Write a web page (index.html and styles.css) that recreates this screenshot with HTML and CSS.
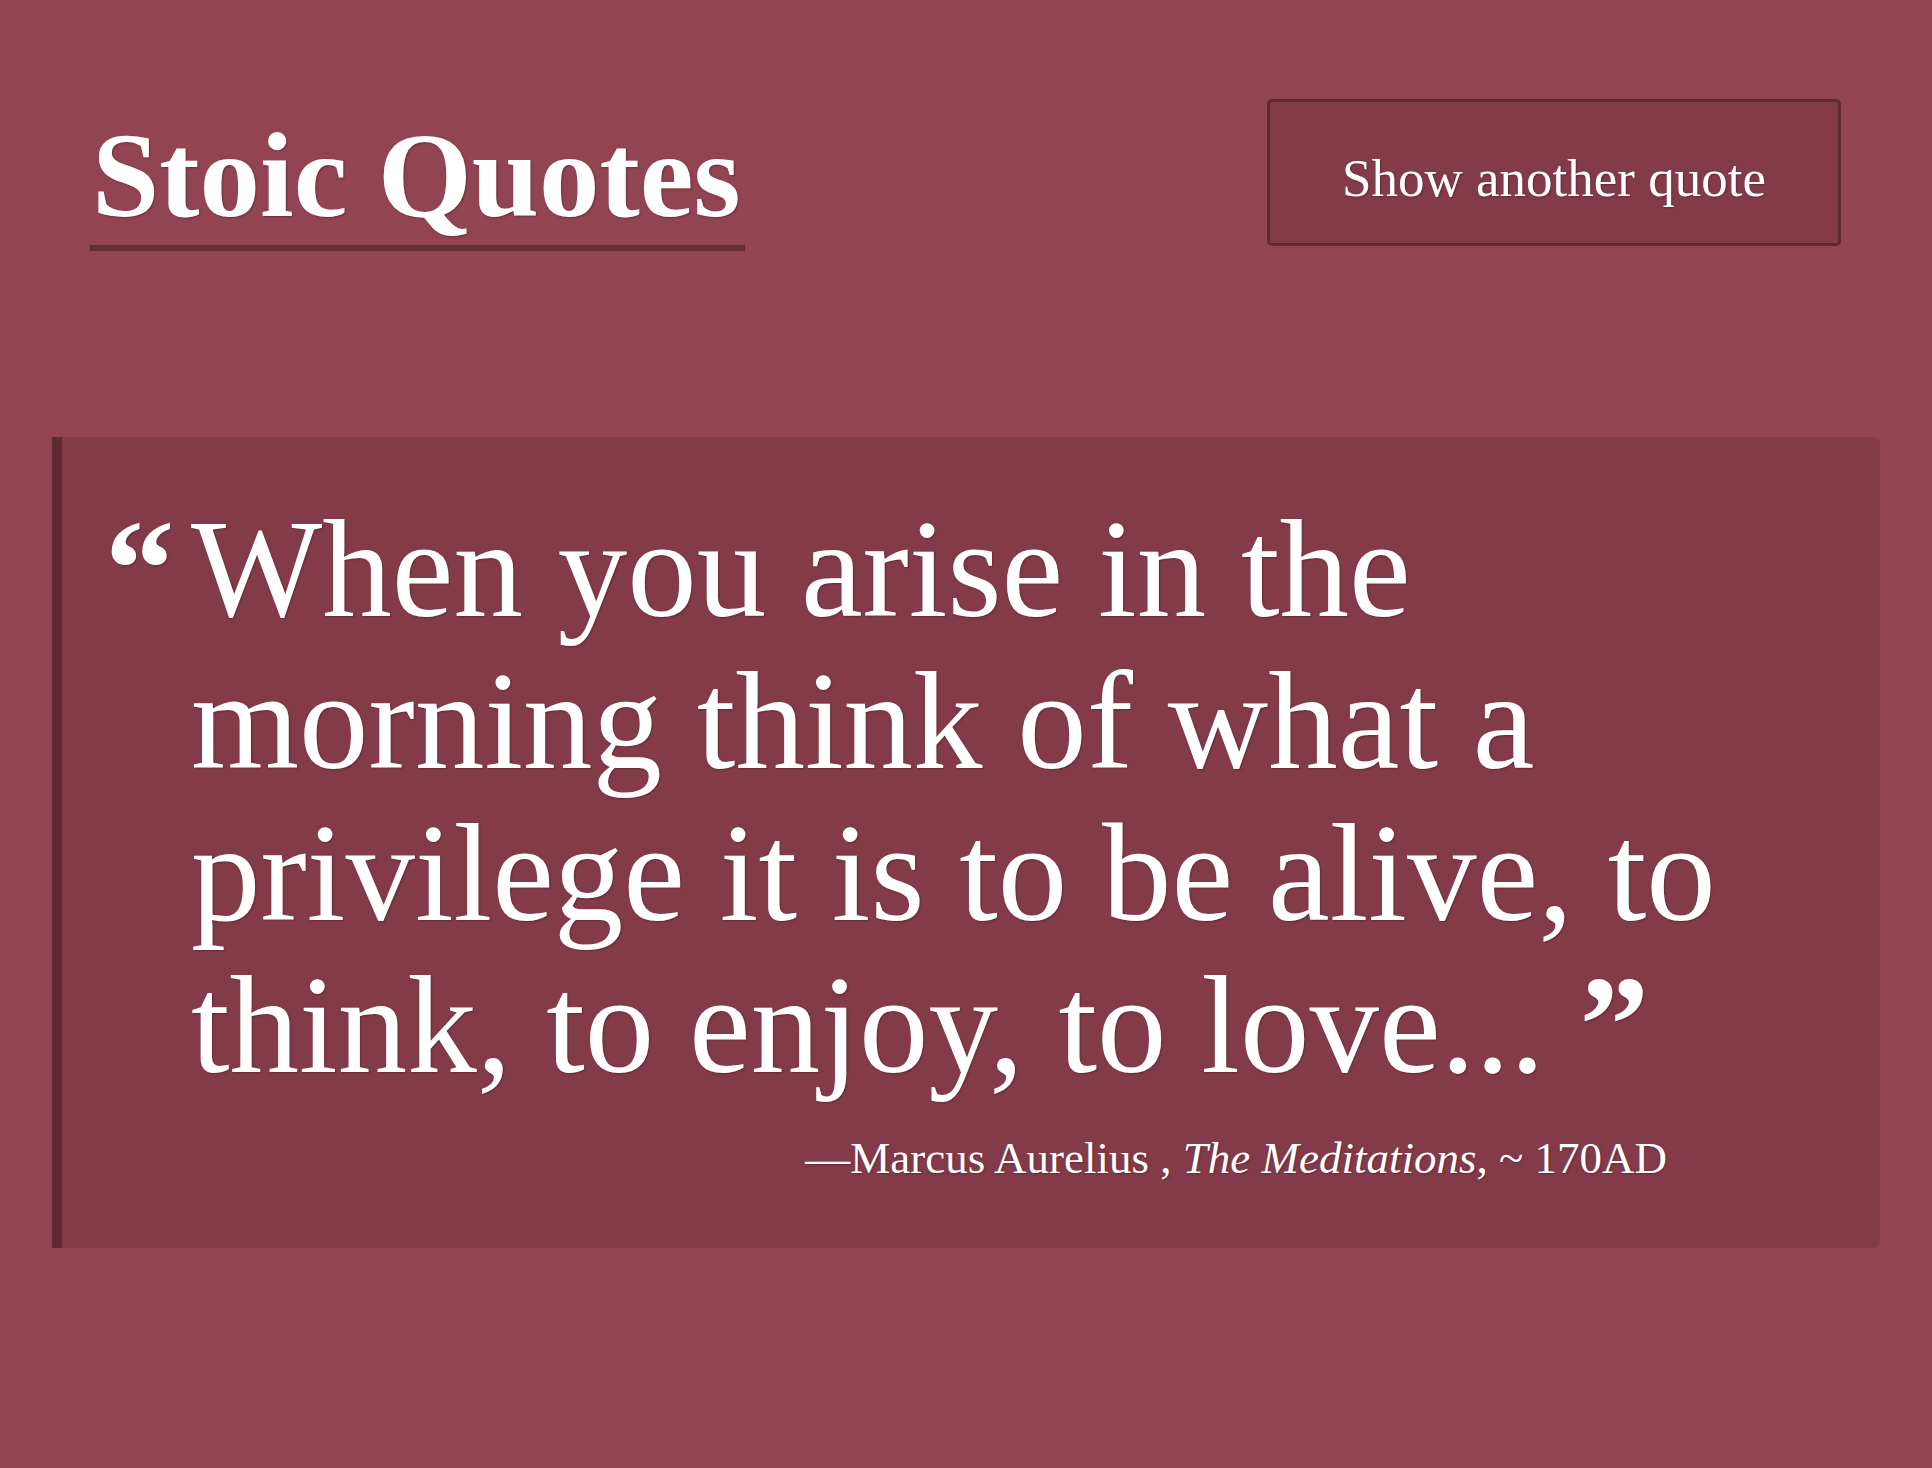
FILE: index.html
```html
<!DOCTYPE html>
<html lang="en">
<head>
<meta charset="utf-8">
<title>Stoic Quotes</title>
<link rel="stylesheet" href="styles.css">
</head>
<body>
<header class="header">
  <h1 class="title">Stoic Quotes</h1>
  <button class="btn" type="button">Show another quote</button>
</header>
<main class="main">
  <blockquote class="card">
    <div class="quote-row">
      <span class="mark mark-open">“</span>
      <p class="quote">When you arise in the morning think of what a privilege it is to be alive, to think, to enjoy, to love... <span class="mark">”</span></p>
    </div>
    <p class="cite">—Marcus Aurelius , <em>The Meditations</em>, ~ 170AD</p>
  </blockquote>
</main>
</body>
</html>
```
FILE: styles.css
```css
html, body {
  margin: 0;
  padding: 0;
}
body {
  background: #924452;
  color: #ffffff;
  font-family: "Liberation Serif", "Times New Roman", serif;
  text-shadow: 1px 1px 2px rgba(40, 10, 20, 0.35);
}
.header {
  display: flex;
  justify-content: space-between;
  align-items: flex-start;
  padding: 99px 91px 0 90px;
}
.title {
  margin: 16px 0 0 0;
  padding: 0 4px 10px 2px;
  font-size: 121px;
  line-height: 120px;
  font-weight: 700;
  border-bottom: 6px solid #652d3a;
}
.btn {
  box-sizing: border-box;
  width: 574px;
  margin: 0;
  padding: 50px 0 39px;
  background: #843b49;
  border: 3px solid #5e2a35;
  border-radius: 5px;
  color: #ffffff;
  font-family: "Liberation Serif", "Times New Roman", serif;
  font-size: 53px;
  line-height: 52px;
  text-shadow: 1px 1px 2px rgba(40, 10, 20, 0.35);
  cursor: pointer;
}
.main {
  padding: 186px 52px 0 52px;
}
.card {
  margin: 0;
  padding: 56px 89px 63px 43px;
  background: #843b49;
  border-left: 10px solid #5e2a35;
  border-radius: 0 7px 7px 0;
}
.quote-row {
  display: flex;
  align-items: flex-start;
}
.quote {
  flex: 1;
  margin: 0;
  font-size: 139px;
  line-height: 152px;
}
.mark {
  font-weight: 700;
  font-size: 139px;
  line-height: 152px;
}
.mark-open {
  width: 86px;
  flex: none;
}
.cite {
  margin: 30px 0 0 0;
  padding-right: 124px;
  text-align: right;
  font-size: 45px;
  line-height: 54px;
}
.cite em {
  font-style: italic;
}
```
